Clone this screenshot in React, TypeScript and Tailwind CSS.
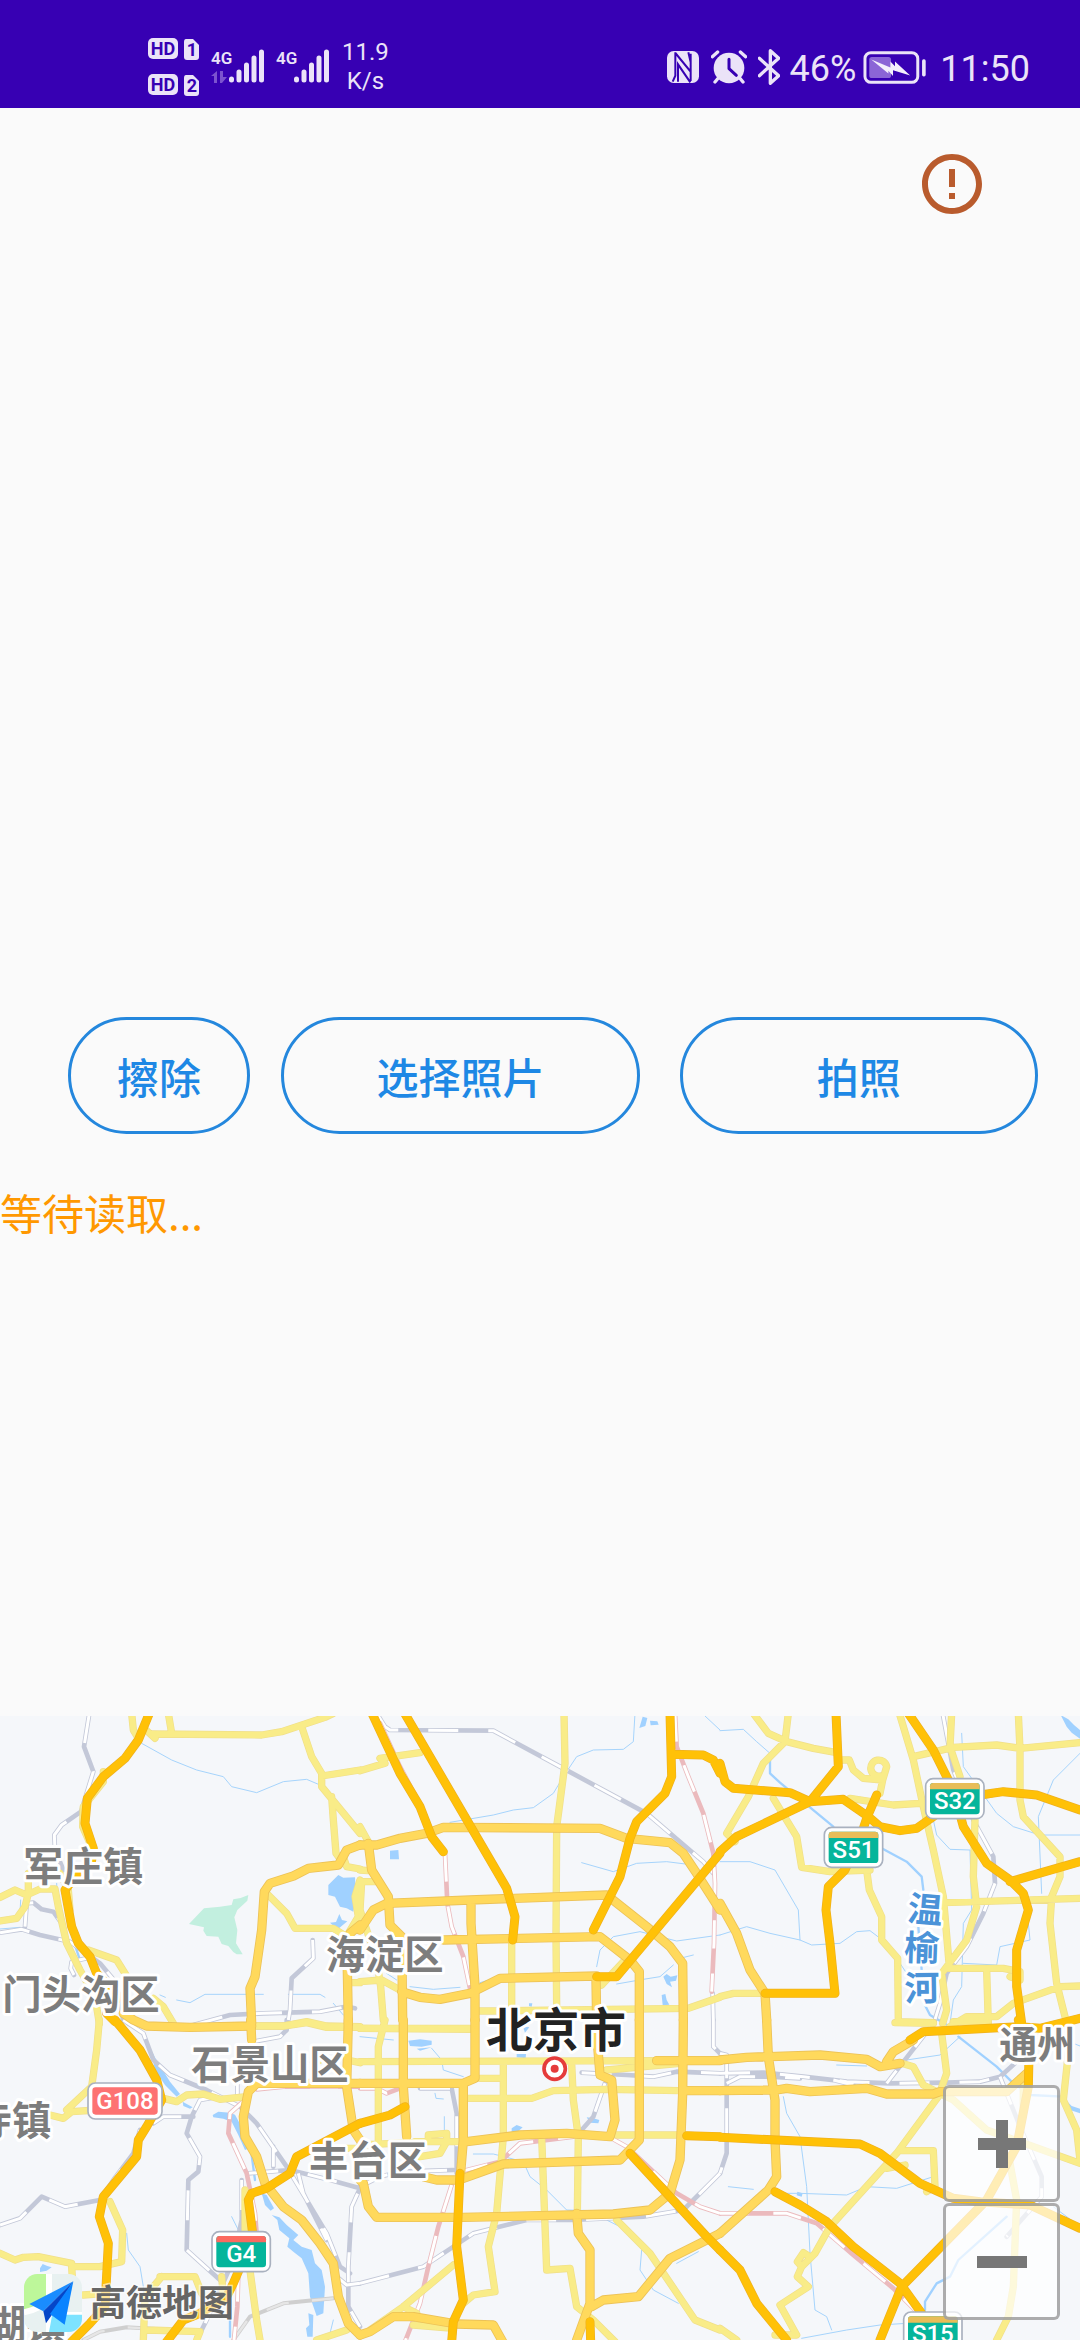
import { Fragment } from "react";

type Tile = {
  x: number;
  y: number;
  minor?: string;
  main?: string;
  express?: string;
  rail?: string;
  oldRail?: string;
  metro?: string;
  stream?: string;
  river?: string;
  lake?: string;
  park?: string;
};

/* Paths use the origin of their own tile; rows of tiles overlap a little. */
const TILES: Tile[] = [
  {
    x: 0,
    y: 0,
    minor:
      "M395 10L400 60L415 85M505 10L515 70M440 62L465 85M455 72L785 75L845 65L975 22L1000 10M905 50L935 140L965 190L965 230L1080 370M965 198L1080 180M995 260L1000 330L1008 430L1030 460M0 562L45 540L80 555L120 537L165 537L175 590L200 700L240 780L285 860L298 940M85 490L85 550L75 590L50 625L0 633M310 185L310 215L250 290L248 350L270 400M180 490L205 540L210 600M265 720L350 750L378 795M460 865L490 890L520 940M805 555L860 610L885 655L1000 655L1040 680M1080 477L1040 470L1030 440M1080 510L1065 560L1075 620L1045 670M1055 818L1080 818M770 948L850 948L920 935L980 948L1080 950",
    main:
      "M1080 405L1040 420L1015 465L925 475L880 498L810 520L793 545L785 660L765 800L750 835L755 940M370 910L400 930L440 948L570 952L755 948M1080 645L1050 670L1042 780L1045 940",
    express:
      "M448 10L415 90L375 145L310 200L262 265L255 340L280 415L275 450L235 488L195 540L215 650L235 700L270 740L290 790L355 860L320 910L345 935",
    rail:
      "M268 10L252 110L280 185L243 305L185 345L163 375L165 420L190 480M0 668L65 658L120 675L210 695L300 760L350 820L370 930M75 650L80 580L100 578L125 598L160 605L185 640M260 745L215 755L212 775L222 795M938 690L940 745L875 805L870 900L865 930M580 945L690 915L790 910L960 905L1040 890L1065 895",
    stream:
      "M425 100L515 150L590 180L670 200L695 230L770 248L850 215L920 208L960 225M480 855L496 862M530 870L570 878L615 853L790 853M865 853L960 853L975 862M1000 880L1030 915M60 610L62 570M0 657L60 652M170 520L172 560",
    river: "M365 925L385 945M225 705L238 745",
    lake:
      "M985 525L1015 495L1030 503L1065 502L1068 560L1060 605L1040 595L1020 590L1005 560L985 555ZM990 638L1008 636L1018 612L1026 630L1042 634L1025 648L1008 662L1004 650Z",
    park:
      "M567 642L612 595L660 590L695 585L700 568L722 564L745 555L742 572L712 600L703 622L712 660L708 700L728 733L710 733L700 726L685 708L665 702L655 680L620 678L610 662L612 652Z",
  },
  {
    x: 1080,
    y: 0,
    minor:
      "M0 182L75 160L60 145L180 128M612 10L615 160L598 290L590 350L588 680L590 890M0 350L25 395M0 480L25 482M0 515L45 515M5 515L0 600L50 750L62 830L70 930M0 815L65 810L120 840M455 700L455 890M350 903L390 903L985 895L1080 862M790 755L725 825M0 955L330 955",
    main:
      "M0 405L50 405L120 385L200 370L250 352L720 355L800 385L930 398L970 430L1010 490L1080 600M25 400L35 480L85 560L90 645L125 680L128 930M0 660L40 600L80 580L330 570L740 555L860 650L930 710L968 760L970 930M333 580L333 640L345 830L345 930M250 690L720 680L810 750L838 785L838 930M125 845L180 862L240 868L330 850L420 805L710 798M708 810L710 930",
    express:
      "M36 10L120 190L180 290L215 380L250 425M134 10L440 535L465 620L458 690M930 10L935 200L915 250L830 335L810 385L780 500L700 660M935 133L1030 135L1060 150L1080 190M1080 430L770 800L710 800",
    rail:
      "M50 10L75 50L90 60L400 62L600 170L860 310L1030 455L1060 490M1058 850L1060 930",
    metro:
      "M60 40L120 170L165 255M255 430L262 580L275 650L310 740L330 835M945 10L950 110L985 200L1030 310L1060 430L1065 520L1062 700L1055 845",
    stream:
      "M270 337L400 315L460 300L520 293L580 250L610 200L650 140L700 120L790 118L820 95L825 10M1035 18L1080 60M665 458L760 485L830 460L920 455L1000 465M710 770L720 720L760 680L840 665L950 693L1080 675M770 822L850 808L900 800L940 765M150 830L220 838L300 832M360 818L420 800M960 745L1000 735M80 790L110 810",
    lake:
      "M90 422L115 420L117 448L90 448ZM848 20L862 24L856 48L838 54ZM870 32L892 34L896 44L872 46ZM910 800L920 792L932 800L952 796L948 812L930 815L936 832L920 822ZM905 855L916 852L920 870L928 884L908 886ZM507 880L517 880L515 890L507 888ZM500 910L515 906L505 935L492 950Z",
  },
  {
    x: 2160,
    y: 0,
    minor:
      "M100 10L145 70L200 95L280 115L350 128M205 10L195 95L130 160L85 260L20 370L45 395M538 10L580 150L610 290L640 420L670 560L688 770M580 140L700 112L830 105L900 115L1080 98M695 10L690 110L720 200M895 10L900 120L900 270L910 320L1020 440L1020 500L995 560L990 640L1010 820L1035 920M355 150L388 150L400 180L430 205L488 210L500 170A24 24 0 1 0 480 198M488 210L480 250M390 265L520 285L600 280M160 265L230 380L245 472L330 485L450 480M440 480L448 540L485 620L485 690L533 745L535 935L640 938M670 578L1080 565M765 330L760 500L770 590L740 690L665 790L680 900L668 940M680 775L850 775L900 785L900 810L870 800M800 780L805 940M690 950L740 920L830 920L880 880L1020 830L1080 828M0 860L40 850L130 850M800 255L830 248",
    main: "M0 580L50 670L90 780L135 850L140 930",
    express:
      "M348 10L355 170L270 275M0 160L15 215L40 235L210 248L270 275L370 268L445 320L480 350L540 362L590 355L640 320M0 425L50 380L270 275M470 255L440 325L425 370L375 480L325 530L318 600L330 700L345 850L135 850M565 10L640 120L700 240L730 350L800 460L870 510L910 550L925 600L890 720L890 830L905 940M780 255L850 245L950 255L1080 300M870 515L1080 455",
    rail:
      "M668 10L700 180L760 330L820 440L825 520L790 610L740 710L680 790L660 880L640 945",
    stream:
      "M0 62L70 58L110 95L150 130M0 455L90 455L165 480L235 600L240 690M0 675L80 650L150 670L240 690L275 705L360 700L410 665L450 662L500 700L560 790M725 70L730 170L830 310L880 350L960 375L1080 375M640 330L650 375L690 418L750 420L755 600L730 640L725 830L700 870L690 940M1080 130L1000 210L955 320L965 550M730 760L830 765L840 710L930 690L920 590",
    river: "M150 130L150 190L180 218L340 350M485 415L560 455L605 500L610 540M595 650L605 780M612 880L630 915L690 950",
    lake: "M1022 15L1045 28L1062 45L1080 60L1080 86L1055 68L1040 50Z",
  },
  {
    x: 0,
    y: 930,
    minor:
      "M298 0L290 90L275 200L200 270M150 285L190 295L215 275L290 270M0 325L30 305M490 235L530 245L560 225L610 222L660 238L740 230M330 545L368 630L365 725L300 740L215 740L215 730L115 710L70 712L45 720L0 700M215 740L220 820M250 825L320 820M735 510L735 640L770 900L780 960M480 770L585 770L605 820M485 770L435 830L430 960M440 930L600 935L590 960M665 770L670 830M770 18L850 18L920 8L980 22L1080 22M1040 120L1080 128M950 960L1040 930M1030 385L1080 385M940 128L960 120",
    main:
      "M752 0L755 60M1045 0L1040 200L1060 330L1080 360M1080 190L770 190L745 215L730 290L735 350L770 410L795 490L850 560L905 600L960 670L1000 730L1015 830L1045 910L1080 945",
    express:
      "M345 0L420 90L470 180L485 240L440 320L415 360L410 410L310 530L298 590L325 670L315 860L270 910L215 965M1080 310L890 410L870 460L800 505L755 520L745 540L758 640L730 720L700 790L680 830L600 880L550 900L500 965",
    rail:
      "M370 0L430 40L460 120L510 165L620 210L720 260L770 310L860 440L980 640L1020 740L1050 760M655 230L600 240L575 290L560 340L600 410L595 455L565 480L560 690L660 780M460 310L490 290L580 290M0 615L60 595L125 530L195 560L300 540L340 480L400 400L420 330M760 65L840 50L860 30L860 0M712 190L712 230M745 460L870 450L990 480L1080 505L1055 560L1045 740L1045 860L1080 920M725 480L725 600L700 720L620 900L590 960M895 460L910 520L980 660M1080 790L1040 795L1010 770M820 380L820 440",
    oldRail: "M250 960L300 935L380 922L480 928M700 960L750 890L850 850L1000 835",
    metro: "M740 235L690 280L685 340L740 460L765 580L770 640M715 760L712 860L702 960M770 208L850 200L1080 200",
    stream: "M695 590L720 640M380 640L385 690L420 740L430 800L430 860M1000 900L985 960",
    river: "M385 10L430 40M450 90L470 130M755 405L765 480M690 900L690 950",
    lake:
      "M455 105L470 120L510 185L540 222L530 230L495 195L465 150ZM548 245L578 262L570 266L550 258ZM638 285L655 275L690 278L705 284L730 330L748 385L735 390L715 345L695 305L670 296L640 292ZM785 520L800 525L822 565L812 572L795 555ZM815 585L838 592L860 615L895 645L880 660L905 680L935 690L945 730L965 750L975 800L970 880L950 888L930 830L925 760L905 715L880 695L862 680L868 655L838 630L832 600ZM925 880L940 885L938 950L922 950L918 925L928 915ZM120 745L128 732L142 738L155 742L140 752L120 756Z",
  },
  {
    x: 1080,
    y: 930,
    minor:
      "M0 25L330 28M75 0L55 80L55 370M0 125L920 122M360 175L430 175M430 130L430 350L410 580L385 680L405 815L340 825L310 850M320 235L515 235L580 212L740 208L960 212M635 130L640 240L655 350L652 580M545 350L560 750L630 745L650 860L700 900L765 965M770 600L870 700L1005 900L1080 930M740 150L960 130M770 345L960 345M0 375L100 370L205 365L205 345L260 340L260 365L240 400L180 410M165 365L320 365M280 735L130 860L30 930M130 860L170 880M160 915L280 925",
    main:
      "M130 0L130 200L140 350M345 0L345 175L310 190L0 190M310 190L310 360L300 480L230 480L190 470M838 0L838 360L780 420L430 432L310 475M970 0L968 220L960 420L930 520L870 570L760 582L310 592L50 592L25 560L10 490L0 480M320 365L480 345L620 340L750 350L765 300L755 180L720 165L710 40M970 212L1080 212M890 122L1080 122M650 580L655 640L690 690L690 850L650 960M695 860L730 840L835 830L930 715L1080 640M0 945L30 935L100 890L160 890L290 912L400 915L428 965",
    express:
      "M0 310L90 285L135 260M300 460L290 680L310 840L280 905L275 965M810 400L1040 650L1080 690M980 347L1080 350M690 905L692 965",
    rail:
      "M180 205L275 205L290 280L290 460M0 790L190 740L340 640L500 600L640 600L850 590L970 570L1080 460M0 500L60 470L120 455L280 450M665 158L800 165L880 170L950 155L1080 160M735 190L700 290L665 330M1060 0L1060 80L1080 100M200 365L240 365",
    metro:
      "M0 205L50 205L80 220L120 205M755 355L800 380L950 520L1020 560L1080 580M300 455L420 425L480 370L640 350M275 495L235 620L205 740L180 850L135 965",
    stream:
      "M0 50L100 60M215 85L245 120L250 150L310 170M340 402L400 402L490 425L510 470L560 510L620 570L700 572M740 600L780 620M845 690L840 750L880 810L955 850M950 730L1015 695M225 220L228 235L250 237M253 290L253 330",
    lake:
      "M145 62L180 58L215 62L215 74L185 80L150 78ZM170 86L215 82L180 92ZM470 102L498 102L497 115L470 112ZM455 325L470 315L488 322L475 334L455 336ZM680 292L700 295L718 300L715 310L690 308ZM488 18L508 22L495 38Z",
  },
  {
    x: 2160,
    y: 930,
    minor:
      "M525 8L640 10M700 5L800 5M665 40L680 160L655 230L530 400L330 620L285 700L245 740L232 770L265 800L180 855L230 945L165 945M245 740L232 725L250 698L272 712M545 130L580 140L610 195L700 240L800 330L1080 430M545 392L640 392L645 500L620 515M500 445L555 435M870 430L890 540L880 800L865 890L830 960M1045 100L1030 240L1070 330L1080 420M0 925L50 960M910 180L910 260",
    main:
      "M0 120L80 112L300 105L440 118L480 140L540 130M500 125L520 95L580 60M0 212L170 210L200 205L270 215L440 205L500 222L640 222M640 222L660 215L860 215L920 160M140 0L145 110L165 240L165 360L170 470L145 510L0 640",
    express:
      "M570 60L610 35L900 20L960 25L1080 -5M0 352L170 360L420 372L480 400L600 490L700 535L780 545L930 555L1080 625M895 0L928 60L925 200L890 380L800 540L545 800L480 960M165 515L240 555L320 605L400 680L540 790L605 880M0 690L60 750L110 850L200 960",
    rail: "M0 160L130 158L250 170L380 185L510 190L680 188L780 185L840 170L885 130M0 100L20 105L20 400L0 460M20 190L60 170L150 170L240 175M340 180L400 195M640 10L500 190M840 170L900 320L965 470L965 530L860 650",
    metro: "M0 580L200 580L290 610L400 705L520 805L590 875",
    stream:
      "M190 230L200 280L240 350L260 500L270 700L285 870L320 890L335 930M175 520L240 520L380 525L440 500L530 505L640 470M245 955L380 930L480 915L560 910M560 120L660 105L720 50M1000 560L1080 620M25 500L100 508M350 135L440 138M1060 70L1080 78",
    river:
      "M715 50L830 140L880 190L930 225L1030 230M615 870L615 845L650 790L690 770L715 720L860 590",
    lake: "M232 515L248 520L245 530L230 526ZM1035 238L1055 258L1080 266L1080 280L1050 270L1034 255Z",
  },
];

type LineKey = "stream" | "river" | "oldRail" | "rail" | "metro" | "minor" | "main" | "express";
type Pass = { color: string; width: number; dash?: string };

const LINES: { key: LineKey; passes: Pass[] }[] = [
  { key: "stream", passes: [{ color: "#a6d4fc", width: 3 }] },
  { key: "river", passes: [{ color: "#a0d1ff", width: 7 }] },
  {
    key: "oldRail",
    passes: [
      { color: "#cfcfcf", width: 12 },
      { color: "#e6e6e6", width: 7, dash: "70 70" },
    ],
  },
  {
    key: "rail",
    passes: [
      { color: "#c3c8d8", width: 14 },
      { color: "#ffffff", width: 9, dash: "90 90" },
    ],
  },
  {
    key: "metro",
    passes: [
      { color: "#ebbabd", width: 14 },
      { color: "#ffffff", width: 9, dash: "85 75" },
    ],
  },
  {
    key: "minor",
    passes: [
      { color: "#f0df8a", width: 22 },
      { color: "#f9ec88", width: 18 },
    ],
  },
  {
    key: "main",
    passes: [
      { color: "#ecc257", width: 28 },
      { color: "#ffd95c", width: 23 },
    ],
  },
  {
    key: "express",
    passes: [
      { color: "#eeb01f", width: 27 },
      { color: "#ffc107", width: 23 },
    ],
  },
];

const LABELS = [
  { text: "军庄镇", x: 250, y: 513, size: 120 },
  { text: "门头沟区", x: 243, y: 896, size: 118 },
  { text: "海淀区", x: 1154, y: 778, size: 118 },
  { text: "石景山区", x: 810, y: 1106, size: 118 },
  { text: "丰台区", x: 1104, y: 1396, size: 118 },
  { text: "寺镇", x: 36, y: 1274, size: 118 },
  { text: "湖镇", x: 78, y: 1886, size: 118 },
  { text: "通州", x: 3112, y: 1044, size: 114 },
];

const RIVER_LABEL = [
  { text: "温", x: 2776, y: 637, turn: "rotate(5 2776 597)" },
  { text: "榆", x: 2766, y: 752, turn: "rotate(2 2766 712)" },
  { text: "河", x: 2766, y: 872, turn: "rotate(-1 2766 832)" },
];

const SHIELDS = [
  { text: "G108", x: 264, y: 1119, w: 222, h: 108, fill: "#fd7272", band: "" },
  { text: "G4", x: 636, y: 1565, w: 175, h: 120, fill: "#05b59b", band: "#fb6a60" },
  { text: "S51", x: 2473, y: 352, w: 175, h: 120, fill: "#05b59b", band: "#e8bd58" },
  { text: "S32", x: 2777, y: 206, w: 175, h: 120, fill: "#05b59b", band: "#e8bd58" },
  { text: "S15", x: 2711, y: 1806, w: 175, h: 120, fill: "#05b59b", band: "#e8bd58" },
];

function CityMap() {
  return (
    <svg viewBox="0 18 3240 1872" className="block w-full bg-[#f5f7fa]" role="img" aria-label="北京市地图">
      {TILES.map((t) => (
        <g key={`${t.x}-${t.y}`} transform={`translate(${t.x} ${t.y})`}>
          {t.park && <path d={t.park} fill="#c2efdf" />}
          {t.lake && <path d={t.lake} fill="#a0d1ff" />}
        </g>
      ))}
      {LINES.map(({ key, passes }) => (
        <Fragment key={key}>
          {passes.map((p) => (
            <g
              key={p.color}
              fill="none"
              stroke={p.color}
              strokeWidth={p.width}
              strokeDasharray={p.dash}
              strokeLinejoin="round"
              strokeLinecap={p.dash ? "butt" : "round"}
            >
              {TILES.map((t) => (
                <path key={`${t.x}-${t.y}`} d={t[key]} transform={`translate(${t.x} ${t.y})`} />
              ))}
            </g>
          ))}
        </Fragment>
      ))}

      <g
        fontFamily="'Noto Sans CJK SC', sans-serif"
        fontWeight="700"
        fill="#7d7d7d"
        stroke="#ffffff"
        strokeWidth="18"
        strokeLinejoin="round"
        paintOrder="stroke"
        textAnchor="middle"
      >
        {LABELS.map((l) => (
          <text key={l.text} x={l.x} y={l.y} fontSize={l.size}>
            {l.text}
          </text>
        ))}
        {RIVER_LABEL.map((l) => (
          <text key={l.text} x={l.x} y={l.y} fontSize="105" fill="#4b93d8" transform={l.turn}>
            {l.text}
          </text>
        ))}
        <text x="1668" y="1012" fontSize="140" fill="#222222">
          北京市
        </text>
      </g>

      <circle cx="1664" cy="1076" r="32" fill="#fff" stroke="#e53b3b" strokeWidth="11" />
      <circle cx="1664" cy="1076" r="12" fill="#e53b3b" />

      {SHIELDS.map((s) => (
        <g key={s.text}>
          <rect x={s.x} y={s.y} width={s.w} height={s.h} rx="22" fill="#fff" stroke="#a9b1bf" strokeWidth="5" />
          <rect x={s.x + 13} y={s.y + 13} width={s.w - 26} height={s.h - 26} rx="10" fill={s.fill} />
          {s.band && (
            <path
              d={`M${s.x + 13} ${s.y + 32}v-9q0-10 10-10h${s.w - 46}q10 0 10 10v9z`}
              fill={s.band}
            />
          )}
          <text
            x={s.x + s.w / 2}
            y={s.y + (s.band ? 91 : 79)}
            fontSize="72"
            fontFamily="Roboto, sans-serif"
            fontWeight="500"
            fill="#fff"
            textAnchor="middle"
          >
            {s.text}
          </text>
        </g>
      ))}
    </svg>
  );
}

function MapLogo() {
  return (
    <div className="absolute bottom-2 left-6 flex items-center gap-2">
      <svg viewBox="0 0 174 174" className="size-[58px]" aria-hidden="true">
        <clipPath id="logo-clip">
          <rect width="174" height="174" rx="40" />
        </clipPath>
        <g clipPath="url(#logo-clip)">
          <rect width="174" height="174" fill="#e8f1f1" />
          <path d="M0 0H66V75Q50 100 0 108Z" fill="#bdf79a" />
          <path d="M75 0V174M0 115Q50 105 75 75" stroke="#fff" strokeWidth="18" fill="none" />
          <path d="M85 120H174V174H75Z" fill="#7de3ff" />
          <path d="M75 118H174" stroke="#fff" strokeWidth="8" />
        </g>
        <path d="M148 22L16 90L58 112Z" fill="#1a8cff" />
        <path d="M148 22L58 112L66 148L84 122Z" fill="#0546c8" />
        <path d="M148 22L78 120L122 152Z" fill="#0a84ff" />
      </svg>
      <svg viewBox="0 0 148 48" className="h-12 w-[148px]" role="img" aria-label="高德地图">
        <text
          x="0"
          y="37"
          fontSize="36"
          fontWeight="700"
          fontFamily="'Noto Sans CJK SC', sans-serif"
          fill="#666666"
          stroke="#ffffff"
          strokeOpacity="0.6"
          strokeWidth="3"
          paintOrder="stroke"
        >
          高德地图
        </text>
      </svg>
    </div>
  );
}

function SimBadge({ slot }: { slot: string }) {
  return (
    <svg viewBox="0 0 52 22" className="h-[22px] w-[52px]" aria-label={`HD ${slot}`} role="img">
      <rect x="0" y="0" width="30" height="21" rx="5" fill="#ebe3f8" />
      <text x="15" y="17" textAnchor="middle" fontFamily="Roboto, sans-serif" fontSize="18" fontWeight="700" fill="#3700b3">
        HD
      </text>
      <path d="M38 1H45L51 7V19Q51 22 48 22H39Q36 22 36 19V4Q36 1 38 1Z" fill="#ebe3f8" />
      <text x="44" y="18" textAnchor="middle" fontFamily="Roboto, sans-serif" fontSize="18" fontWeight="700" fill="#3700b3">
        {slot}
      </text>
    </svg>
  );
}

function Signal({ active }: { active?: boolean }) {
  return (
    <svg viewBox="0 0 54 36" className="h-9 w-[54px]" aria-label="4G" role="img">
      <text x="0" y="15" fontFamily="Roboto, sans-serif" fontSize="17" fontWeight="600" fill="#ebe3f8">
        4G
      </text>
      {active && (
        <path d="M6 22V34H3V27H0ZM9 34V22H12V28H16L11 34Z" fill="#7c53cf" />
      )}
      <path d="M20.500 30V31M28 23V31M35.500 16V31M43 9V31M50.500 3V31" stroke="#ebe3f8" strokeWidth="5" strokeLinecap="round" />
    </svg>
  );
}

function StatusBar() {
  return (
    <header className="flex h-[108px] items-center justify-between bg-[#3700b3] pr-[50px] pl-[148px] font-[Roboto,sans-serif] text-[#ebe3f8]">
      <div className="flex items-center pt-[26px]">
        <div className="flex flex-col gap-[14px]">
          <SimBadge slot="1" />
          <SimBadge slot="2" />
        </div>
        <div className="ml-[11px] flex gap-[11px]">
          <Signal active />
          <Signal />
        </div>
        <div className="ml-3 text-center text-2xl leading-[29px]">
          11.9
          <br />
          K/s
        </div>
      </div>
      <div className="flex items-center pt-[26px]">
        <svg viewBox="0 0 96 96" className="size-8" role="img" aria-label="NFC">
          <rect width="96" height="96" rx="20" fill="#ebe3f8" />
          <path
            d="M25 4V74L17 92M25 6L71 62V34L64 4M71 8V90M33 92V40L70 94"
            fill="none"
            stroke="#3700b3"
            strokeWidth="6"
          />
        </svg>
        <svg viewBox="0 0 108 102" className="ml-3 h-[34px] w-9" role="img" aria-label="闹钟">
          <circle cx="54" cy="54" r="46" fill="#ebe3f8" />
          <path d="M4 20L20 6M104 20L88 6M22 84L12 96M86 84L96 96" stroke="#ebe3f8" strokeWidth="10" strokeLinecap="round" />
          <path d="M54 28V56L76 76" fill="none" stroke="#3700b3" strokeWidth="9" strokeLinecap="round" strokeLinejoin="round" />
        </svg>
        <svg viewBox="0 0 66 108" className="ml-[11px] h-9 w-[22px]" role="img" aria-label="蓝牙">
          <path
            d="M4 28L62 80L37 103V5L62 28L4 80"
            fill="none"
            stroke="#ebe3f8"
            strokeWidth="10"
            strokeLinejoin="round"
            strokeLinecap="round"
          />
        </svg>
        <span className="ml-[10px] pt-1 text-4xl">46%</span>
        <svg viewBox="0 0 192 100" className="ml-[7px] h-[33px] w-16" role="img" aria-label="充电中">
          <rect x="5" y="5" width="160" height="90" rx="18" fill="none" stroke="#ebe3f8" strokeWidth="9" />
          <rect x="18" y="18" width="66" height="64" rx="8" fill="#8b65d6" />
          <path d="M24 26L82 50V32L96 46V32L142 74L90 58V76L76 60V68Z" fill="#f4effc" />
          <rect x="178" y="25" width="11" height="52" rx="5" fill="#ebe3f8" />
        </svg>
        <span className="ml-[13px] pt-1 text-4xl">11:50</span>
      </div>
    </header>
  );
}

const PILL =
  "h-[117px] basis-0 rounded-full border-3 border-[#2487dd] text-[42px] font-medium text-[#1e88e5]";
const ZOOM =
  "flex size-[117px] items-center justify-center rounded-md border-3 border-[#777]/60 bg-white/70";

export default function App() {
  return (
    <div className="flex min-h-screen flex-col bg-[#fafafa] font-['Noto_Sans_CJK_SC',sans-serif]">
      <StatusBar />
      <main className="flex flex-1 flex-col">
        <section className="flex min-h-60 flex-1 items-start justify-end pt-10 pr-[92px]">
          <button type="button" aria-label="提示">
            <svg viewBox="0 0 24 24" className="size-18" fill="#b95b2d" aria-hidden="true">
              <path d="M11 15h2v2h-2zm0-8h2v6h-2zm.99-5C6.470 2 2 6.480 2 12s4.470 10 9.990 10C17.520 22 22 17.520 22 12S17.520 2 11.990 2zM12 20c-4.420 0-8-3.580-8-8s3.580-8 8-8 8 3.580 8 8-3.580 8-8 8z" />
            </svg>
          </button>
        </section>
        <div className="flex pr-[42px] pl-[68px]">
          <button type="button" className={`${PILL} grow`}>
            擦除
          </button>
          <button type="button" className={`${PILL} ml-[31px] grow-2`}>
            选择照片
          </button>
          <button type="button" className={`${PILL} ml-10 grow-2`}>
            拍照
          </button>
        </div>
        <p className="min-h-[582px] pt-12 text-[42px] leading-[60px] text-[#ff9800]">等待读取...</p>
        <section className="relative overflow-hidden">
          <CityMap />
          <MapLogo />
          <div className="absolute right-5 bottom-5 flex flex-col gap-px">
            <button type="button" aria-label="放大" className={ZOOM}>
              <svg viewBox="0 0 50 50" className="size-[50px]" aria-hidden="true">
                <path d="M25 1V49M1 25H49" stroke="#777" strokeWidth="12" />
              </svg>
            </button>
            <button type="button" aria-label="缩小" className={ZOOM}>
              <svg viewBox="0 0 50 50" className="size-[50px]" aria-hidden="true">
                <path d="M0 25H50" stroke="#777" strokeWidth="12" />
              </svg>
            </button>
          </div>
        </section>
      </main>
    </div>
  );
}
